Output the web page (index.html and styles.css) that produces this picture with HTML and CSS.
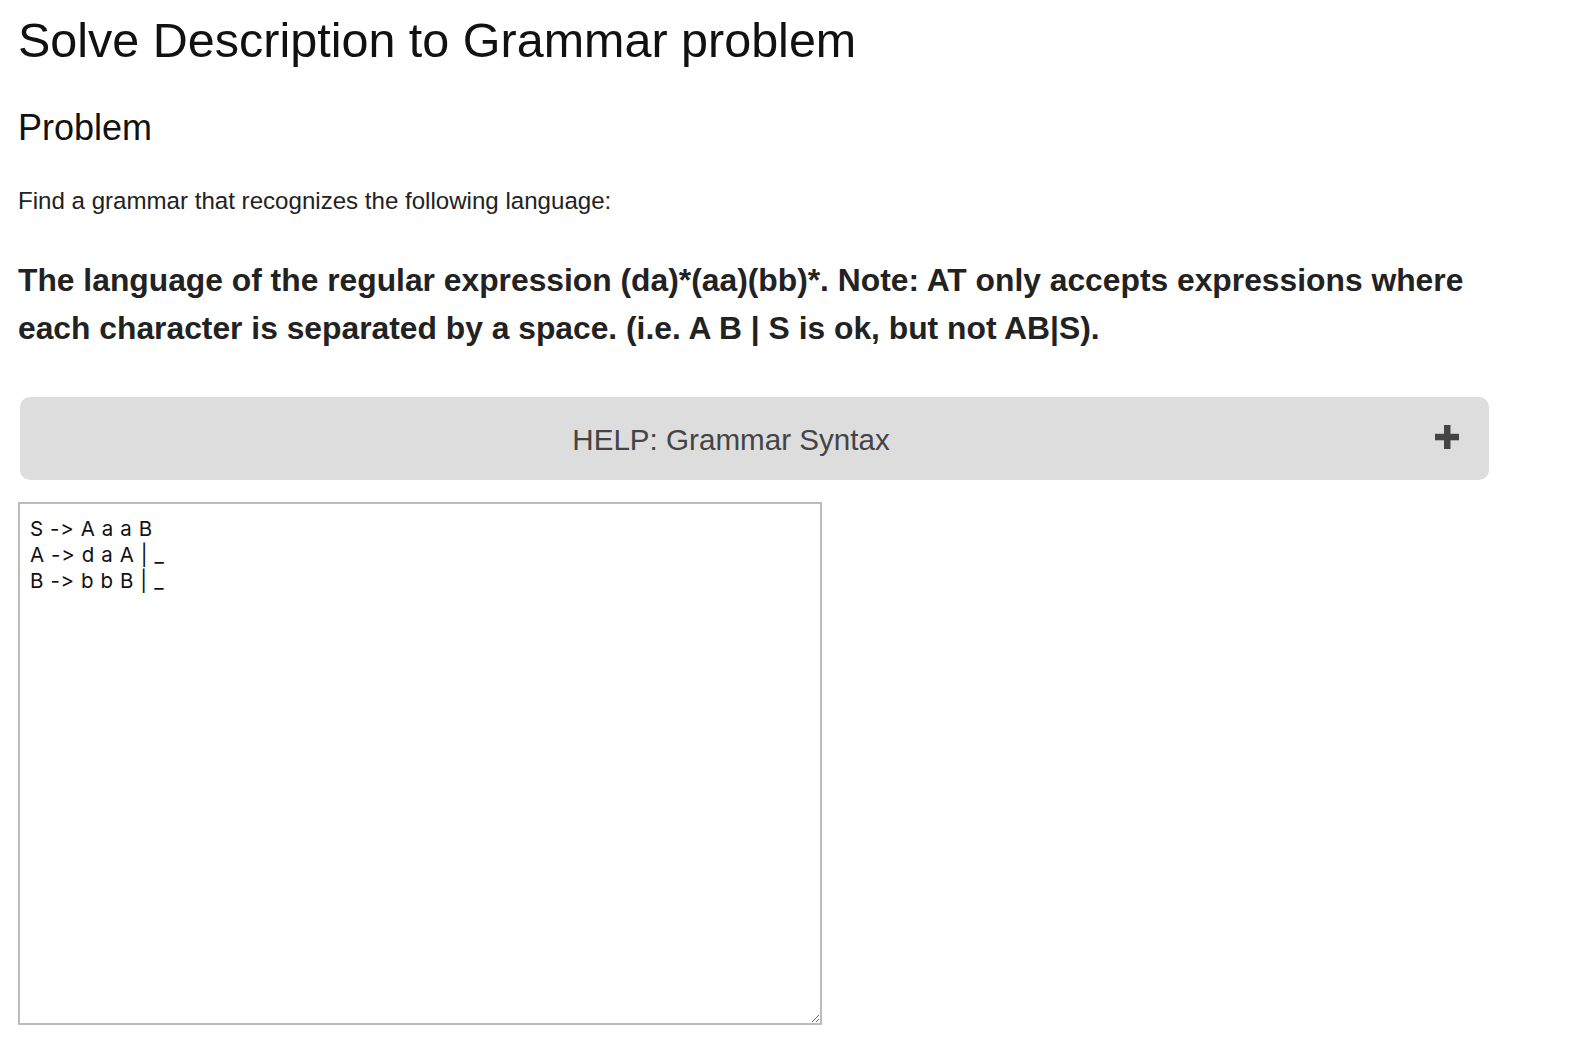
FILE: index.html
```html
<!DOCTYPE html>
<html lang="en">
<head>
<meta charset="utf-8">
<title>Solve Description to Grammar problem</title>
<link rel="stylesheet" href="styles.css">
</head>
<body>
<main class="page">
  <h1 class="title">Solve Description to Grammar problem</h1>
  <h2 class="subtitle">Problem</h2>
  <p class="intro">Find a grammar that recognizes the following language:</p>
  <p class="statement">The language of the regular expression (da)*(aa)(bb)*. Note: AT only accepts expressions where each character is separated by a space. (i.e. A B | S is ok, but not AB|S).</p>
  <div class="help-bar">
    <span class="help-label">HELP: Grammar Syntax</span>
    <svg class="help-plus" width="24" height="24" viewBox="0 0 24 24" aria-hidden="true">
      <rect x="9" y="0" width="6.5" height="24" fill="#444"/>
      <rect x="0" y="8.8" width="24" height="6.5" fill="#444"/>
    </svg>
  </div>
  <textarea class="answer" spellcheck="false">S -> A a a B
A -> d a A | _
B -> b b B | _</textarea>
</main>
</body>
</html>
```

FILE: styles.css
```css
html, body {
  margin: 0;
  padding: 0;
  background: #fff;
}

body {
  font-family: "Liberation Sans", Arial, Helvetica, sans-serif;
  color: #111;
}

.page {
  padding: 0 0 0 18px;
  width: 1473px;
  display: flex;
  flex-direction: column;
  align-items: flex-start;
}

.title {
  margin: 12px 0 0;
  font-size: 48.5px;
  line-height: 56px;
  font-weight: normal;
  color: #111;
}

.subtitle {
  margin: 40px 0 0;
  font-size: 36px;
  line-height: 40px;
  font-weight: normal;
  color: #111;
}

.intro {
  margin: 39px 0 0;
  font-size: 24.1px;
  line-height: 28px;
  color: #222;
}

.statement {
  margin: 41px 0 0;
  font-size: 31.8px;
  line-height: 48px;
  font-weight: bold;
  color: #222;
}

.help-bar {
  margin: 45px 0 0 2px;
  width: 1469px;
  height: 83px;
  box-sizing: border-box;
  background: #dddddd;
  border-radius: 10px;
  display: flex;
  align-items: center;
  padding-left: 17px;
  padding-right: 30px;
}

.help-label {
  flex: 1;
  text-align: center;
  font-size: 29.6px;
  color: #444;
  line-height: 36px;
  padding-top: 2px;
}

.help-plus {
  display: block;
  margin-left: 10px;
  margin-top: -4px;
}

.answer {
  margin: 22px 0 0;
  width: 804px;
  height: 523px;
  box-sizing: border-box;
  border: 2px solid #bbbbbb;
  border-radius: 0;
  padding: 12px 8px 12px 10px;
  font-family: Inter, "Noto Sans", sans-serif;
  font-size: 20.5px;
  line-height: 26px;
  letter-spacing: 0.6px;
  font-feature-settings: "calt" 0, "liga" 0;
  font-variant-ligatures: none;
  color: #111;
  background: #fff;
  outline: none;
}
```
